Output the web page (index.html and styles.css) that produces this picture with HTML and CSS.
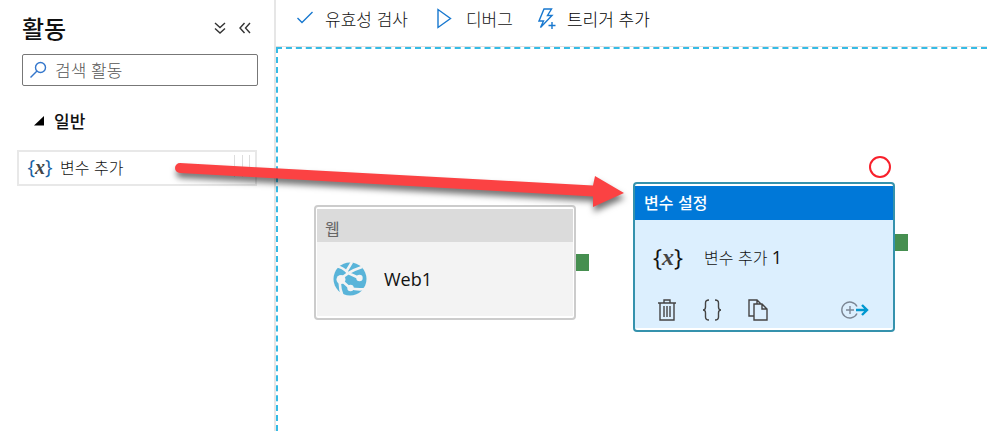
FILE: index.html
```html
<!DOCTYPE html>
<html lang="ko">
<head>
<meta charset="utf-8">
<title>활동</title>
<link rel="stylesheet" href="styles.css">
</head>
<body>
<div class="app">
  <aside class="sidebar">
    <header class="sidebar-head">
      <h1>활동</h1>
      <button class="icon-button" type="button" aria-label="모두 펼치기">
        <svg width="12" height="12" viewBox="0 0 12 12"><path d="M1 1l5 4.500 5-4.500M1 6.500l5 4.500 5-4.500"/></svg>
      </button>
      <button class="icon-button" type="button" aria-label="접기">
        <svg width="12" height="12" viewBox="0 0 12 12"><path d="M5.500 1L1 6l4.500 5M11 1L6.500 6l4.500 5"/></svg>
      </button>
    </header>
    <div class="search">
      <svg width="18" height="18" viewBox="0 0 18 18"><circle cx="10.500" cy="6.500" r="5"/><path d="M7 10L0.500 16.500"/></svg>
      <input type="text" aria-label="검색 활동" placeholder="검색 활동">
    </div>
    <button class="group" type="button">
      <svg width="10" height="10" viewBox="0 0 10 10"><path d="M10 0v9.500H0z"/></svg>
      <span>일반</span>
    </button>
    <button class="activity" type="button">
      <span class="variable variable-small"><b>{</b><i>x</i><b>}</b></span>
      <span>변수 추가</span>
      <span class="grip"></span>
    </button>
  </aside>
  <main class="main">
    <nav class="toolbar">
      <button type="button">
        <svg width="18" height="22" viewBox="0 0 18 22"><path d="M1.500 10l4.500 4.500L16.500 4"/></svg>
        <span>유효성 검사</span>
      </button>
      <button type="button">
        <svg width="22" height="22" viewBox="0 0 22 22"><path d="M5 1.500v18l12.500-9z"/></svg>
        <span>디버그</span>
      </button>
      <button type="button" class="strong">
        <svg width="18" height="22" viewBox="0 0 18 22"><path d="M6 1h7.500L9.500 7.500h4.500L2.500 19.500l3-6.500H1zM10.500 17.500h7M14 14v7"/></svg>
        <span>트리거 추가</span>
      </button>
    </nav>
    <section class="canvas">
      <article class="node node-web">
        <h2>웹</h2>
        <div class="node-body">
          <svg width="34" height="34" viewBox="0 0 34 34">
            <circle cx="17" cy="17" r="16.500" fill="#59b4d9"/>
            <g fill="none" stroke="#f3f3f3" stroke-width="2.600">
              <path d="M2 4Q10 5 15 11L26 16M7 18Q14 10 29 5M7 18Q6 26 10 35M8 18L17 26Q24 28 32 27M13 10L19 0"/>
            </g>
            <g fill="#f3f3f3"><circle cx="8" cy="17.500" r="4.500"/><circle cx="26.500" cy="16" r="3.200"/><circle cx="17.500" cy="26" r="3.200"/></g>
          </svg>
          <span class="node-name">Web1</span>
        </div>
        <span class="port"></span>
      </article>
      <article class="node node-variable">
        <h2>변수 설정</h2>
        <div class="node-body">
          <span class="variable"><b>{</b><i>x</i><b>}</b></span>
          <span class="node-label">변수 추가 <span class="number">1</span></span>
        </div>
        <footer class="actions">
          <button type="button" aria-label="삭제"><svg width="18" height="22" viewBox="0 0 18 22"><path d="M0 4h18M2 4v17h14V4M6 4V1h6v3M6 7v11M9 7v11M12 7v11"/></svg></button>
          <button type="button" aria-label="코드"><svg width="20" height="22" viewBox="0 0 20 22"><path d="M7 1Q3.500 1 3.500 4v4Q3.500 11 1 11Q3.500 11 3.500 14v4Q3.500 21 7 21M13 1Q16.500 1 16.500 4v4Q16.500 11 19 11Q16.500 11 16.500 14v4Q16.500 21 13 21"/></svg></button>
          <button type="button" aria-label="복제"><svg width="20" height="22" viewBox="0 0 20 22"><path d="M6 17H1V1h8l4 4M9 1v4M6 5h8l5 5v11H6zM14 5v5h5"/></svg></button>
          <button type="button" class="add-output" aria-label="출력 추가"><svg width="28" height="18" viewBox="0 0 28 18"><path class="ring" d="M16 5.500A8 8 0 1 0 16 12.500M5 9h8M9 5v8"/><path class="out" d="M15 9h11M21 4l5 5-5 5"/></svg></button>
        </footer>
        <span class="port"></span>
        <span class="status"></span>
      </article>
    </section>
  </main>
  <svg class="drag-arrow" width="470" height="80" viewBox="0 0 470 80" aria-hidden="true">
    <path d="M20 13L433 35.500L435 26L464 43L433 57L433 46.500L20 23A5 5 0 0 1 20 13z"/>
  </svg>
</div>
</body>
</html>
```

FILE: styles.css
```css
* {
  box-sizing: border-box;
}

body {
  margin: 0;
  background: #fff;
  color: #111;
  font: 300 16px/24px "Noto Sans CJK KR", sans-serif;
}

h1,
h2 {
  margin: 0;
}

button {
  margin: 0;
  padding: 0;
  border: 0;
  background: none;
  color: inherit;
  font: inherit;
  cursor: pointer;
}

svg {
  display: block;
  flex: none;
  fill: none;
  stroke-width: 1.4;
}

.app {
  position: relative;
  display: flex;
  min-height: 100vh;
  overflow: hidden;
}

.sidebar {
  flex: 0 0 276px;
  min-width: 0;
  padding: 11px 17px;
  border-right: 2px solid #e6e6e6;
}

.sidebar-head {
  display: flex;
  align-items: center;
  gap: 13px;
  padding: 0 6px 0 5px;
}

.sidebar-head h1 {
  margin-right: auto;
  font-size: 24px;
  line-height: 34px;
  font-weight: 500;
}

.icon-button {
  stroke: #333;
}

.search {
  display: flex;
  align-items: center;
  gap: 7px;
  height: 32px;
  margin: 9px -1px 0 5px;
  padding: 0 7px;
  border: 1px solid #777;
  border-radius: 2px;
  stroke: #3477cc;
}

.search input {
  flex: 1;
  min-width: 0;
  padding: 0;
  border: 0;
  outline: 0;
  background: none;
  font: inherit;
  font-size: 17px;
}

.search input::placeholder {
  color: #555;
  opacity: 1;
}

.group {
  display: flex;
  align-items: center;
  gap: 10px;
  margin: 23px 0 0 17px;
  font-size: 17px;
  font-weight: 500;
}

.group svg {
  fill: #000;
}

.activity {
  display: flex;
  align-items: center;
  gap: 8px;
  width: 100%;
  height: 36px;
  margin-top: 17px;
  padding: 0 5px 2px 9px;
  border: 2px solid #e8e8e8;
}

.variable {
  display: flex;
  flex: none;
  align-items: center;
  justify-content: center;
  width: 30px;
  color: #111;
  font: 24px/28px "Open Sans", sans-serif;
}

.variable b {
  font-weight: 400;
}

.variable i {
  color: #444;
  font-family: "Liberation Serif", serif;
  font-weight: 700;
}

.variable-small {
  width: 24px;
  font-size: 20px;
}

.variable-small b {
  color: #1863a5;
}

.grip {
  width: 16px;
  height: 22px;
  margin: 0 0 3px auto;
  border: solid #ddd;
  border-width: 0 1px;
  background: linear-gradient(#ddd, #ddd) center / 1px 100% no-repeat;
}

.main {
  display: flex;
  flex: 1;
  flex-direction: column;
  min-width: 0;
}

.toolbar {
  display: flex;
  align-items: center;
  gap: 25px;
  height: 47px;
  padding: 0 20px 8px;
  border-bottom: 1px solid #e3dfdf;
  font-size: 17px;
}

.toolbar button {
  display: flex;
  align-items: center;
  gap: 11px;
  white-space: nowrap;
}

.toolbar svg {
  stroke: #1878cf;
}

.toolbar .strong {
  color: #000;
}

.canvas {
  position: relative;
  flex: 1;
  border: dashed #35bbe5;
  border-width: 2px 0 0 2px;
}

.node {
  position: absolute;
  width: 262px;
  padding: 2px 1px;
  border: 2px solid #ccc;
  border-radius: 4px;
  background: #fff;
}

.node h2 {
  padding: 7px 8px 2px;
  font-size: 16px;
  font-weight: 400;
}

.node-body {
  display: flex;
  align-items: center;
}

.node-web {
  left: 36px;
  top: 156px;
}

.node-web h2 {
  background: #dbdbdb;
  color: #666;
}

.node-web .node-body {
  gap: 17px;
  height: 74px;
  padding: 0 16px;
  background: #f3f3f3;
}

.node-name {
  font: 18px/24px "Open Sans", sans-serif;
}

.node-variable {
  left: 355px;
  top: 133px;
  padding: 2px 0;
  border-color: #3592ad;
}

.node-variable h2 {
  padding: 4px 9px 6px;
  background: #0078d8;
  color: #fff;
  font-weight: 500;
}

.node-variable .node-body {
  gap: 21px;
  height: 74px;
  padding: 0 18px;
  background: #dceffe;
}

.number {
  font: 18px/24px "Open Sans", sans-serif;
}

.actions {
  display: flex;
  align-items: center;
  gap: 26px;
  height: 34px;
  padding: 4px 24px 6px 23px;
  background: #dceffe;
  stroke: #444;
}

.add-output {
  margin-left: auto;
}

.ring {
  stroke: #7c8795;
}

.out {
  stroke: #0098d0;
  stroke-width: 2.4;
}

.port {
  position: absolute;
  top: 47px;
  right: -15px;
  width: 13px;
  height: 17px;
  background: #468f50;
}

.node-variable .port {
  top: 50px;
}

.status {
  position: absolute;
  top: -28px;
  right: 2px;
  width: 22px;
  height: 22px;
  border: 2px solid #f8202b;
  border-radius: 50%;
}

.drag-arrow {
  position: absolute;
  top: 150px;
  left: 160px;
  fill: #fb4243;
  filter: drop-shadow(1px 5px 3px rgba(0, 0, 0, 0.55));
  pointer-events: none;
}
```
